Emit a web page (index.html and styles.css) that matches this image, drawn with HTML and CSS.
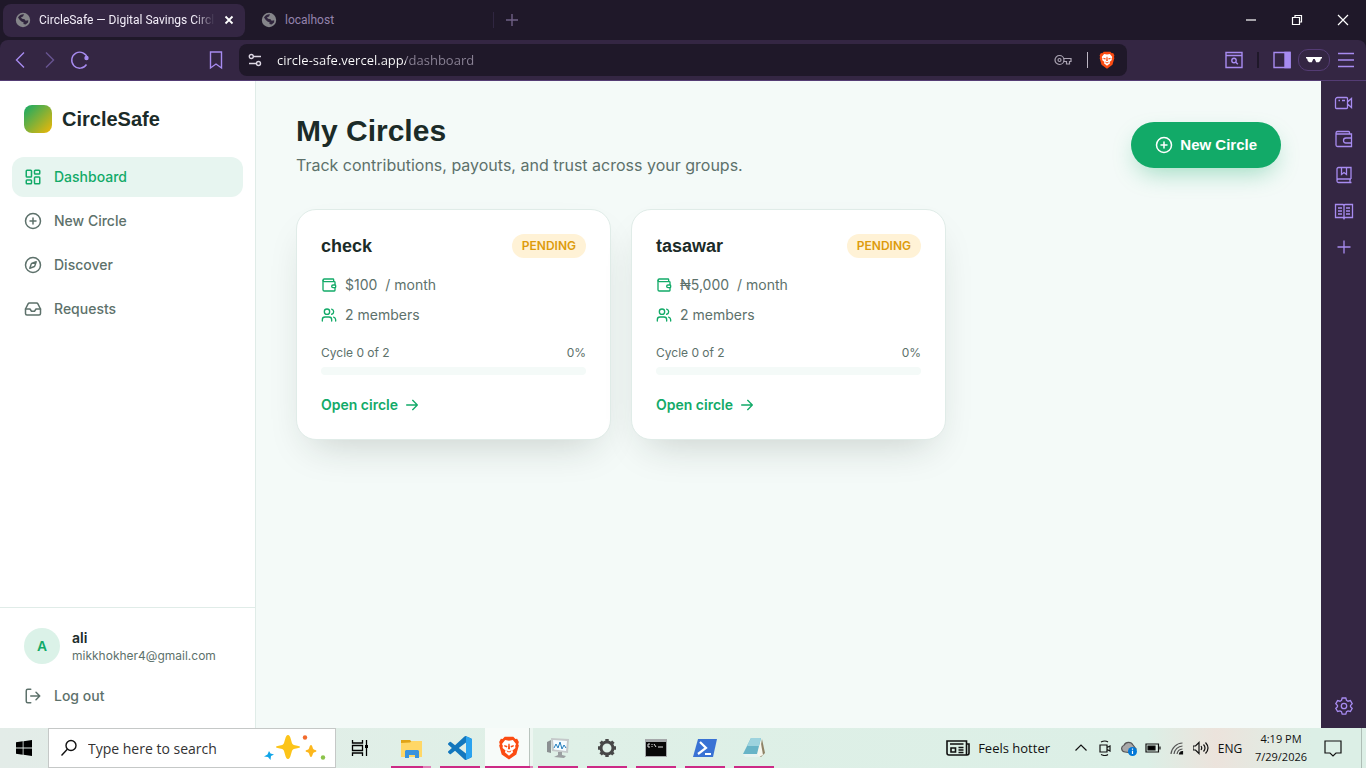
FILE: index.html
```
<!DOCTYPE html>
<html lang="en">

<head>
    <meta charset="UTF-8">
    <meta name="viewport" content="width=device-width, initial-scale=1.0">
    <title>CircleSafe — Digital Savings Circles</title>
    <link rel="stylesheet" href="styles.css">
</head>

<body>
    <!-- shared icons -->
    <svg class="sprite" aria-hidden="true">
        <symbol id="i-globe" viewBox="0 0 16 16">
            <circle cx="8" cy="8" r="7.2" fill="#85858a" />
            <path d="M3 5.5C4.500 3 7 2 9 2.300L8 4.500 6 5.200l1 1.600 2.500.4 1.200 1.600 2.600-.6-.3 2.300-2.400 2-2.200-.4.300-1.700L6.500 9.500 4.800 8z" fill="#30253d" />
        </symbol>
        <symbol id="i-plus" viewBox="0 0 24 24">
            <circle cx="12" cy="12" r="10" />
            <path d="M8 12h8M12 8v8" />
        </symbol>
        <symbol id="i-wallet" viewBox="0 0 24 24">
            <path d="M19 7V4a1 1 0 0 0-1-1H5a2 2 0 0 0 0 4h15a1 1 0 0 1 1 1v4h-3a2 2 0 0 0 0 4h3a1 1 0 0 0 1-1v-2a1 1 0 0 0-1-1" />
            <path d="M3 5v14a2 2 0 0 0 2 2h15a1 1 0 0 0 1-1v-4" />
        </symbol>
        <symbol id="i-users" viewBox="0 0 24 24">
            <path d="M16 21v-2a4 4 0 0 0-4-4H6a4 4 0 0 0-4 4v2" />
            <circle cx="9" cy="7" r="4" />
            <path d="M22 21v-2a4 4 0 0 0-3-3.870M16 3.130a4 4 0 0 1 0 7.750" />
        </symbol>
        <symbol id="i-arrow" viewBox="0 0 24 24">
            <path d="M4 12h16M13 5l7 7-7 7" />
        </symbol>
        <symbol id="i-brave" viewBox="0 0 24 28">
            <path d="M7 1h10l2.500 2.500 2-.3L23.500 7l-.8 2.500.8 1.500-3 10.500L12 27.500l-8.500-6L.5 11l.8-1.500L.5 7l2-3.800 2 .3z" fill="#fb4b12" />
            <path d="M12 5.500l4.500-.8 3.700 4.500-1 2.300.3 2.500-3.500 3 .8 2-4.800 4-4.800-4 .8-2-3.500-3 .3-2.500-1-2.300 3.700-4.500z" fill="#fff" />
            <path d="M6.500 10.500l3.800 1.300-.8 1.500-3-1zM17.500 10.500l-3.800 1.300.8 1.500 3-1zM11.300 9h1.400l.6 6.500h-2.600zM9 16.500l3 1.500 3-1.500-1.500 2.500h-3z" fill="#fb4b12" />
        </symbol>
    </svg>

    <div class="screen">
        <header class="browser">
            <div class="tabs">
                <div class="tab tab-active">
                    <svg class="favicon"><use href="#i-globe" /></svg>
                    <button class="tab-title" type="button">CircleSafe — Digital Savings Circl</button>
                    <button class="tab-close" type="button" aria-label="Close tab">
                        <svg viewBox="0 0 10 10" width="10" height="10"><path d="M1.500 1.500l7 7M8.500 1.500l-7 7" stroke="#fff" stroke-width="1.800" /></svg>
                    </button>
                </div>
                <div class="tab tab-idle">
                    <svg class="favicon"><use href="#i-globe" /></svg>
                    <button class="tab-title" type="button">localhost</button>
                </div>
                <button class="tab-new" type="button" aria-label="New tab">
                    <svg viewBox="0 0 12 12" width="12" height="12"><path d="M6 0v12M0 6h12" stroke="#6f6085" stroke-width="1.400" /></svg>
                </button>
                <div class="window-buttons">
                    <button type="button" aria-label="Minimize"><svg viewBox="0 0 12 12"><path d="M1 6h10" /></svg></button>
                    <button type="button" aria-label="Restore"><svg viewBox="0 0 12 12"><path d="M1.500 3.500h7v7h-7zM4 3V1.500h6.500V8H9" /></svg></button>
                    <button type="button" aria-label="Close"><svg viewBox="0 0 12 12"><path d="M1 1l10 10M11 1L1 11" /></svg></button>
                </div>
            </div>

            <div class="toolbar">
                <div class="nav-buttons">
                    <button type="button" aria-label="Back"><svg viewBox="0 0 20 20"><path d="M14 2.500L6.500 10l7.500 7.500" /></svg></button>
                    <button class="dim" type="button" aria-label="Forward"><svg viewBox="0 0 20 20"><path d="M6 2.500l7.500 7.500L6 17.500" /></svg></button>
                    <button type="button" aria-label="Reload"><svg viewBox="0 0 20 20"><path d="M17.500 8.200A8 8 0 1 0 16.500 14.500" /><circle cx="16.500" cy="8" r="1.500" fill="#a78bf0" /></svg></button>
                </div>
                <button class="bookmark" type="button" aria-label="Bookmark"><svg viewBox="0 0 20 20"><path d="M4.500 2h11v16L10 14l-5.500 4z" /></svg></button>
                <div class="address">
                    <svg class="site-info" viewBox="0 0 14 14"><path d="M5.500 3.500H13M1 10.500h7" /><circle cx="3.300" cy="3.500" r="2" /><circle cx="10.500" cy="10.500" r="2" /></svg>
                    <input class="url" type="text" aria-label="Address" value="circle-safe.vercel.app/dashboard">
                    <svg class="key" viewBox="0 0 18 12"><circle cx="5.500" cy="6" r="4.500" /><circle cx="5.500" cy="6" r="1.500" /><path d="M9.500 4.500H17v3h-1.500V10h-3V7.500h-3" /></svg>
                    <span class="bar"></span>
                    <svg class="shield"><use href="#i-brave" /></svg>
                </div>
                <div class="tools">
                    <button type="button" aria-label="Search tabs"><svg viewBox="0 0 20 20"><path d="M2 2.500h16v15H2zM2 5.500h16" /><circle cx="10" cy="10.500" r="2.200" /><path d="M11.800 12.300l2 2" /></svg></button>
                    <span class="tool-split"></span>
                    <button type="button" aria-label="Sidebar"><svg viewBox="0 0 20 20"><path d="M2 2.500h16v15H2z" /><path d="M13 2.500h5v15h-5z" fill="#a78bf0" /></svg></button>
                    <button class="private" type="button" aria-label="Private window"><svg viewBox="0 0 16 8"><path d="M0 1h16v1.500h-1l-.8 2.500-1.500 1.200h-2.500L8.700 3H7.300L5.800 6.200H3.300L1.800 5 1 2.500H0z" fill="#fff" /></svg></button>
                    <button type="button" aria-label="Menu"><svg viewBox="0 0 20 20"><path d="M2 3.500h16M2 10h16M2 16.500h16" /></svg></button>
                </div>
            </div>
        </header>

        <div class="viewport">
            <aside class="sidebar">
                <div class="brand">
                    <span class="brand-mark"></span>
                    <span class="brand-name">CircleSafe</span>
                </div>
                <nav class="menu">
                    <a class="menu-item current" href="#">
                        <svg class="icon" viewBox="0 0 24 24"><rect x="3" y="3" width="7" height="9" rx="1" /><rect x="14" y="3" width="7" height="5" rx="1" /><rect x="14" y="12" width="7" height="9" rx="1" /><rect x="3" y="16" width="7" height="5" rx="1" /></svg>
                        Dashboard
                    </a>
                    <a class="menu-item" href="#">
                        <svg class="icon"><use href="#i-plus" /></svg>
                        New Circle
                    </a>
                    <a class="menu-item" href="#">
                        <svg class="icon" viewBox="0 0 24 24"><path d="m16.240 7.760-1.804 5.411a2 2 0 0 1-1.265 1.265L7.760 16.240l1.804-5.411a2 2 0 0 1 1.265-1.265z" /><circle cx="12" cy="12" r="10" /></svg>
                        Discover
                    </a>
                    <a class="menu-item" href="#">
                        <svg class="icon" viewBox="0 0 24 24"><path d="M22 12h-6l-2 3h-4l-2-3H2" /><path d="M5.450 5.110 2 12v6a2 2 0 0 0 2 2h16a2 2 0 0 0 2-2v-6l-3.450-6.890A2 2 0 0 0 16.760 4H7.240a2 2 0 0 0-1.790 1.110z" /></svg>
                        Requests
                    </a>
                </nav>
                <div class="account">
                    <div class="user">
                        <span class="avatar">A</span>
                        <div class="user-text">
                            <p class="user-name">ali</p>
                            <p class="user-mail">mikkhokher4@gmail.com</p>
                        </div>
                    </div>
                    <button class="menu-item" type="button">
                        <svg class="icon" viewBox="0 0 24 24"><path d="m16 17 5-5-5-5M21 12H9M9 21H5a2 2 0 0 1-2-2V5a2 2 0 0 1 2-2h4" /></svg>
                        Log out
                    </button>
                </div>
            </aside>

            <main class="content">
                <div class="page-head">
                    <div>
                        <h1>My Circles</h1>
                        <p class="lead">Track contributions, payouts, and trust across your groups.</p>
                    </div>
                    <button class="btn-new" type="button">
                        <svg class="icon"><use href="#i-plus" /></svg>
                        New Circle
                    </button>
                </div>
                <div class="circles">
                    <article class="card">
                        <div class="card-top">
                            <h2>check</h2>
                            <span class="badge">PENDING</span>
                        </div>
                        <ul class="facts">
                            <li><svg class="icon"><use href="#i-wallet" /></svg><span>$100</span><span>/ month</span></li>
                            <li><svg class="icon"><use href="#i-users" /></svg><span>2 members</span></li>
                        </ul>
                        <div class="cycle"><span>Cycle 0 of 2</span><span>0%</span></div>
                        <div class="track"></div>
                        <a class="open" href="#">Open circle <svg class="icon"><use href="#i-arrow" /></svg></a>
                    </article>
                    <article class="card">
                        <div class="card-top">
                            <h2>tasawar</h2>
                            <span class="badge">PENDING</span>
                        </div>
                        <ul class="facts">
                            <li><svg class="icon"><use href="#i-wallet" /></svg><span>₦5,000</span><span>/ month</span></li>
                            <li><svg class="icon"><use href="#i-users" /></svg><span>2 members</span></li>
                        </ul>
                        <div class="cycle"><span>Cycle 0 of 2</span><span>0%</span></div>
                        <div class="track"></div>
                        <a class="open" href="#">Open circle <svg class="icon"><use href="#i-arrow" /></svg></a>
                    </article>
                </div>
            </main>

            <div class="rail">
                <button type="button" aria-label="Talk"><svg viewBox="0 0 20 20"><path d="M3.500 4.500h9a1 1 0 0 1 1 1v9a1 1 0 0 1-1 1h-10a1 1 0 0 1-1-1v-8a2 2 0 0 1 2-2zM13.500 9l4-3.500v9L13.500 11M4.500 7.500h1.500M8 7.500h3" /></svg></button>
                <button type="button" aria-label="Wallet"><svg viewBox="0 0 20 20"><path d="M15.500 5V3.500a1 1 0 0 0-1-1H3.500A1.700 1.700 0 0 0 2 4v12a1.500 1.500 0 0 0 1.500 1.500h14V5H2M17.500 9H12a2 2 0 0 0 0 5h5.500" /></svg></button>
                <button type="button" aria-label="Bookmarks"><svg viewBox="0 0 20 20"><path d="M17 14V2.500H4.500A1.500 1.500 0 0 0 3 4v12a1.500 1.500 0 0 0 1.500 1.500H17.500M17 14H4.500A1.500 1.500 0 0 0 3 15.500M16 14v3.500M7.500 2.500v7L10 7.500l2.500 2v-7" /></svg></button>
                <button type="button" aria-label="Reading list"><svg viewBox="0 0 20 20"><path d="M1.500 3.500H9l1 1 1-1h7.500v13H11l-1 1-1-1H1.500zM10 4.500v14M4 7h4M4 10h4M4 13h4M12 7h4M12 10h4M12 13h4" /></svg></button>
                <button type="button" aria-label="Add"><svg viewBox="0 0 20 20"><path d="M10 3.500v13M3.500 10h13" /></svg></button>
                <button class="rail-settings" type="button" aria-label="Settings"><svg viewBox="0 0 20 20"><path d="M8.200 2h3.600l.7 2.300 1.500.9 2.400-.6 1.800 3.100L16.500 9.500v1.200l1.700 1.700-1.800 3.100-2.400-.6-1.500.9-.7 2.300H8.200l-.7-2.300-1.500-.9-2.400.6-1.800-3.100 1.700-1.700V9.500L1.800 7.700l1.800-3.100L6 5.200l1.500-.9z" /><circle cx="10" cy="10" r="2.700" /></svg></button>
            </div>
        </div>

        <footer class="taskbar">
            <button class="start" type="button" aria-label="Start">
                <svg viewBox="0 0 16 16" width="16" height="16"><path d="M0 2.300L6.700 1.300v6.300H0zM7.500 1.200L16 0v7.600H7.500zM0 8.400h6.700v6.300L0 13.700zM7.500 8.400H16V16l-8.500-1.200z" /></svg>
            </button>
            <label class="search">
                <svg class="search-icon" viewBox="0 0 18 18"><circle cx="11" cy="6.500" r="5" /><path d="M7.300 10.200L1.500 16.500" /></svg>
                <input type="text" placeholder="Type here to search" aria-label="Search">
                <svg class="sparkles" viewBox="0 0 62 26">
                    <path d="M24 0c3 0 3 8 5 9.500S36 10.500 36 12s-5 1-7 2.500S27 24 24 24s-3-8-5-9.500S12 13.500 12 12s5-1 7-2.500S21 0 24 0z" fill="#fcc419" />
                    <path d="M47 10c1.500 0 1.500 3.500 2.500 4.200s3 .8 3 1.800-2 1-3 1.800S48.500 22 47 22s-1.500-3.500-2.500-4.200-3-.8-3-1.800 2-1 3-1.800S45.500 10 47 10z" fill="#fcb71d" />
                    <path d="M5 16l1.500 2.500 3.500 1-3 1.500-.5 4-2.500-3-4-.5 3.500-2z" fill="#11a5e8" />
                    <circle cx="41" cy="2.500" r="2.200" fill="#f26a2c" />
                    <circle cx="59" cy="22.500" r="2.200" fill="#8bc34a" />
                </svg>
            </label>
            <button class="task-view" type="button" aria-label="Task view">
                <svg viewBox="0 0 18 16" width="18" height="16"><path d="M1.500 0v3h10V0M1.500 16v-3h10v3M1.500 5.500h10v5h-10zM15.500 0v16" fill="none" stroke="#000" stroke-width="1.300" /><path d="M14 5h3v3h-3z" /></svg>
            </button>
            <div class="apps">
                <button class="app-stack" type="button" aria-label="File Explorer">
                    <svg viewBox="0 0 24 24"><path d="M2 4h9l2 2h10v15H2z" fill="#e0a417" /><path d="M2 7l9-.5 2-1.500h10v16H2z" fill="#ffd766" /><path d="M6 22v-7l1-1h12l1 1v7h-4v-3h-6v3z" fill="#3a93dd" /></svg>
                </button>
                <button type="button" aria-label="Visual Studio Code">
                    <svg viewBox="0 0 24 24"><path d="M23.150 2.587L18.210.210a1.494 1.494 0 0 0-1.705.290l-9.460 8.630-4.120-3.128a.999.999 0 0 0-1.276.057L.327 7.261A1 1 0 0 0 .326 8.740L3.899 12 .326 15.260a1 1 0 0 0 .001 1.479L1.650 17.940a.999.999 0 0 0 1.276.057l4.120-3.128 9.460 8.630a1.492 1.492 0 0 0 1.704.290l4.942-2.377A1.500 1.500 0 0 0 24 20.060V3.939a1.500 1.500 0 0 0-.850-1.352zm-5.146 14.861L10.826 12l7.178-5.448v10.896z" fill="#1377bd" /><path d="M18 .2l5.200 2.400a1.500 1.500 0 0 1 .8 1.300v16.200a1.500 1.500 0 0 1-.8 1.300L18 23.800z" fill="#2ba3ef" /></svg>
                </button>
                <button class="app-active" type="button" aria-label="Brave"><svg><use href="#i-brave" /></svg></button>
                <button type="button" aria-label="Resource Monitor">
                    <svg viewBox="0 0 24 24"><path d="M1 6l4-2v13l-4-1z" fill="#8b9092" /><path d="M5 2l18 1-1 14-16-2z" fill="#c5c9ca" /><path d="M7 4l14 1-1 10-12-1.500z" fill="#f5fbff" /><path d="M8 12l2-4 2 4 2-6 2 7 2-4 2 3" fill="none" stroke="#237dbb" /><path d="M12 16h4v3l4 1-2 2-10-1 4-2z" fill="#9ca0a2" /></svg>
                </button>
                <button type="button" aria-label="Settings">
                    <svg viewBox="0 0 24 24"><circle cx="12" cy="12" r="6" fill="none" stroke="#474747" stroke-width="3" /><path d="M12 3v3M12 18v3M3 12h3M18 12h3M5.600 5.600l2.200 2.200M16.200 16.200l2.200 2.200M5.600 18.400l2.200-2.200M16.200 7.800l2.200-2.200" stroke="#474747" stroke-width="3.400" /></svg>
                </button>
                <button type="button" aria-label="Command Prompt">
                    <svg viewBox="0 0 24 24"><path d="M1 3h22v18H1z" fill="#a5a8aa" /><path d="M2 6h20v14H2z" fill="#080808" /><path d="M6 8H4v3h2M8 8v1M8 10v1M10 8l2 3M14 11h5" fill="none" stroke="#ddd" /></svg>
                </button>
                <button type="button" aria-label="PowerShell">
                    <svg viewBox="0 0 24 24"><path d="M5 3h19l-4 18H0z" fill="#3972d4" /><path d="M7 6l6 6-8 6M12 18h6" fill="none" stroke="#fff" stroke-width="2.200" /></svg>
                </button>
                <button type="button" aria-label="Notepad">
                    <svg viewBox="0 0 24 24"><path d="M20 3l3 14-4 4-2-1z" fill="#8f8266" /><path d="M18 2l3 17-4 2-2-3z" fill="#f6f6ed" /><path d="M9 2h10l-4 16H1z" fill="#68b4c7" /><path d="M9 2h10l-2 8H5z" fill="#9dd3de" /><path d="M1 18h14l2 3H3z" fill="#e8f3f0" /></svg>
                </button>
            </div>
            <div class="tray">
                <button class="weather" type="button">
                    <svg viewBox="0 0 24 16"><path d="M1 1h19.500v14H3a2 2 0 0 1-2-2zM20.500 4H23v9a2 2 0 0 1-2 2M4 4h13.500M12.500 7.500h5M12.500 10h5M12.500 12.500h5M5 8h4.500v4H5z" fill="none" stroke="#111" stroke-width="1.600" /></svg>
                    Feels hotter
                </button>
                <button type="button" aria-label="Show hidden icons"><svg viewBox="0 0 16 16"><path d="M2.500 10.500L8 5l5.500 5.500" /></svg></button>
                <button type="button" aria-label="Camera in use"><svg viewBox="0 0 16 16"><path d="M3 5h7v7H3zM10 7.500l3-1.500v5l-3-1.500M4 2q4-2 7 0M4 14.500q4 2 7 0" /></svg></button>
                <button type="button" aria-label="OneDrive"><svg viewBox="0 0 16 16"><path d="M4 12a3.500 3.500 0 0 1-1-6.800A5 5 0 0 1 12 5l3 4-3 4z" fill="#a9a9a9" stroke="#555" /><circle cx="11.500" cy="11.500" r="4.500" fill="#0078d7" stroke="none" /><path d="M11.500 10.800v3.200M11.500 8.500v1.300" stroke="#fff" /></svg></button>
                <button type="button" aria-label="Battery"><svg viewBox="0 0 16 16"><path d="M1 4h12.500v8H1zM15 6.500v3" /><path d="M3 6h7v4H3z" fill="#000" /></svg></button>
                <button type="button" aria-label="Wi-Fi"><svg viewBox="0 0 16 16"><path d="M2 14A12 12 0 0 1 13.500 3M5 14a9 9 0 0 1 8.500-8M8 14a6 6 0 0 1 5.500-5" stroke="#555" /><path d="M10.500 14a3 3 0 0 1 3-2.500V14z" fill="#000" /></svg></button>
                <button type="button" aria-label="Volume"><svg viewBox="0 0 16 16"><path d="M0 6h2.500L6 2.500v11L2.500 10H0zM8 6q1.500 2 0 4M10.500 4.500q3 3.500 0 7M12.500 2.500q5 5.500 0 11" /></svg></button>
                <button class="lang" type="button">ENG</button>
                <button class="clock" type="button"><span>4:19 PM</span><span>7/29/2026</span></button>
                <button class="notices" type="button" aria-label="Notifications"><svg viewBox="0 0 18 18"><path d="M1 2h16v12h-5l-3 3-3-3H1z" /></svg></button>
                <span class="desktop-edge"></span>
            </div>
        </footer>
    </div>
</body>

</html>
```
FILE: styles.css
```
* {
    margin: 0;
    padding: 0;
    box-sizing: border-box;
}

ul {
    list-style: none;
}

a {
    text-decoration: none;
}

button,
input {
    font: inherit;
    color: inherit;
    background: none;
    border: 0;
    outline: 0;
}

body {
    font-family: Inter, "Liberation Sans", sans-serif;
    font-size: 14px;
    color: #1b2b28;
    overflow: hidden;
}

.sprite {
    display: none;
}

.screen {
    display: flex;
    flex-direction: column;
    height: 100vh;
    background: #1f1829;
}

/* browser */
.browser,
.taskbar {
    font-family: "Open Sans", "Noto Sans", sans-serif;
    flex: none;
}

.browser svg,
.rail svg {
    fill: none;
    stroke: #a78bf0;
    stroke-width: 1.4;
}

.tabs {
    display: flex;
    align-items: center;
    height: 40px;
    padding-left: 3px;
}

.tab {
    display: flex;
    align-items: center;
    height: 33px;
    padding: 0 10px 0 12px;
    border-radius: 8px;
    color: #9483ad;
    font-family: Roboto, sans-serif;
    font-size: 12px;
}

.tab-active {
    width: 242px;
    background: #342643;
    color: #f2edf8;
}

.tab-active .tab-title {
    -webkit-mask-image: linear-gradient(90deg, #000 88%, transparent);
    mask-image: linear-gradient(90deg, #000 88%, transparent);
}

.tab-idle {
    width: 244px;
    margin-left: 4px;
}

.tab-title {
    flex: 1;
    overflow: hidden;
    white-space: nowrap;
    text-align: left;
}

.browser .favicon {
    flex: none;
    width: 16px;
    height: 16px;
    margin-right: 8px;
    stroke: none;
}

.tab-close {
    display: flex;
    margin-left: 8px;
    padding: 2px 1px;
}

.tab-new {
    display: flex;
    align-items: center;
    height: 16px;
    padding: 0 12px;
    border-left: 1px solid #302641;
}

.window-buttons {
    display: flex;
    margin-left: auto;
}

.window-buttons button {
    display: flex;
    align-items: center;
    justify-content: center;
    width: 46px;
    height: 40px;
}

.window-buttons svg {
    width: 12px;
    height: 12px;
    stroke: #fff;
    stroke-width: 1.2;
}

.toolbar {
    display: flex;
    align-items: center;
    height: 41px;
    padding: 0 10px;
    background: #342643;
    border-bottom: 1px solid #543c74;
    border-radius: 8px 8px 0 0;
}

.toolbar button {
    display: flex;
    flex: none;
}

.toolbar button svg {
    width: 20px;
    height: 20px;
}

.nav-buttons {
    display: flex;
    gap: 10px;
}

.dim {
    opacity: .45;
}

.bookmark {
    margin: 0 13px 0 116px;
}

.address {
    display: flex;
    flex: 1;
    align-items: center;
    height: 32px;
    padding: 0 12px 0 9px;
    background: #1f1829;
    border-radius: 8px;
}

.address .site-info {
    width: 14px;
    height: 14px;
    margin-right: 15px;
    stroke: #ddd7e4;
}

/* host in white, path in grey */
.url {
    flex: 1;
    font-size: 13px;
    color: transparent;
    background: linear-gradient(90deg, #fff 129px, #8b8396 129px);
    -webkit-background-clip: text;
    background-clip: text;
}

.address .key {
    width: 18px;
    height: 12px;
    stroke: #aaa3b2;
    stroke-width: 1.2;
}

.bar {
    width: 1px;
    height: 16px;
    margin: 0 11px 0 15px;
    background: #bdb7c4;
}

.address .shield {
    width: 16px;
    height: 18px;
    stroke: none;
}

.tools {
    display: flex;
    align-items: center;
    margin-left: 97px;
}

.tool-split {
    width: 2px;
    height: 16px;
    margin: 0 13px;
    background: #1f1829;
}

.toolbar .private {
    align-items: center;
    justify-content: center;
    width: 32px;
    height: 22px;
    margin: 0 6px;
    border: 1px solid #543c74;
    border-radius: 10px;
}

.toolbar .private svg {
    width: 16px;
    height: 8px;
    stroke: none;
}

/* page area */
.viewport {
    display: flex;
    flex: 1;
    min-height: 0;
    background: #f4faf8;
}

.icon {
    flex: none;
    width: 18px;
    height: 18px;
    fill: none;
    stroke: currentColor;
    stroke-width: 2;
    stroke-linecap: round;
    stroke-linejoin: round;
}

.sidebar {
    display: flex;
    flex-direction: column;
    flex: none;
    width: 256px;
    background: #fff;
    border-right: 1px solid #e0ece8;
}

.brand {
    display: flex;
    align-items: center;
    gap: 10px;
    padding: 24px;
}

.brand-mark {
    width: 28px;
    height: 28px;
    border-radius: 8px;
    background: linear-gradient(135deg, #12aa68, #f2b705);
}

.brand-name,
h1,
h2,
.btn-new,
.avatar {
    font-family: "Liberation Sans", sans-serif;
    font-weight: 700;
}

.brand-name {
    font-size: 20px;
}

.menu {
    display: flex;
    flex-direction: column;
    gap: 4px;
    padding: 0 12px;
}

.menu-item {
    display: flex;
    align-items: center;
    gap: 12px;
    width: 100%;
    height: 40px;
    padding: 0 12px;
    border-radius: 12px;
    color: #5d716b;
    font-weight: 500;
    line-height: 20px;
}

.menu-item.current {
    background: #e7f5f0;
    color: #12aa68;
}

.account {
    margin-top: auto;
    padding: 12px;
    border-top: 1px solid #e0ece8;
}

.user {
    display: flex;
    align-items: center;
    gap: 12px;
    padding: 8px 12px;
    margin-bottom: 4px;
}

.avatar {
    display: flex;
    align-items: center;
    justify-content: center;
    width: 36px;
    height: 36px;
    border-radius: 50%;
    background: #dbf2e8;
    color: #12aa68;
}

.user-name {
    font-weight: 600;
    line-height: 20px;
}

.user-mail {
    font-size: 12px;
    line-height: 16px;
    color: #5d716b;
}

.content {
    flex: 1;
    padding: 32px 40px;
}

.page-head {
    display: flex;
    align-items: center;
    justify-content: space-between;
    margin-bottom: 32px;
}

h1 {
    font-size: 30px;
    line-height: 36px;
    margin-bottom: 4px;
}

.lead {
    font-size: 16px;
    line-height: 24px;
    color: #5d716b;
}

.btn-new {
    display: flex;
    align-items: center;
    gap: 7px;
    height: 46px;
    padding: 0 24px;
    border-radius: 23px;
    background: #12aa68;
    color: #fff;
    font-size: 15px;
    line-height: 18px;
    box-shadow: 0 10px 24px -6px rgba(18, 170, 104, .4);
}

.circles {
    display: grid;
    grid-template-columns: repeat(3, 1fr);
    gap: 20px;
}

.card {
    padding: 24px;
    background: #fff;
    border: 1px solid #e0ece8;
    border-radius: 20px;
    box-shadow: 0 18px 40px -16px rgba(27, 43, 30, .22);
}

.card-top {
    display: flex;
    align-items: center;
    justify-content: space-between;
    margin-bottom: 16px;
}

h2 {
    font-size: 18px;
    line-height: 24px;
}

.badge {
    padding: 0 10px;
    border-radius: 12px;
    background: #fff2d6;
    color: #dd9b0c;
    font-size: 12px;
    font-weight: 600;
    line-height: 24px;
}

.facts li {
    display: flex;
    align-items: center;
    gap: 8px;
    margin-bottom: 8px;
    line-height: 22px;
    color: #5d716b;
}

.facts .icon {
    width: 16px;
    height: 16px;
    color: #12aa68;
}

.cycle {
    display: flex;
    justify-content: space-between;
    margin: 18px 0 5px;
    font-size: 12px;
    line-height: 18px;
    color: #5d716b;
}

.track {
    height: 8px;
    margin-bottom: 20px;
    border-radius: 4px;
    background: #f4faf8;
}

.open {
    display: flex;
    align-items: center;
    gap: 6px;
    line-height: 20px;
    font-weight: 600;
    color: #12aa68;
}

.open .icon {
    width: 16px;
    height: 16px;
}

.rail {
    display: flex;
    flex-direction: column;
    align-items: center;
    gap: 16px;
    flex: none;
    width: 45px;
    padding: 12px 0;
    background: #342643;
}

.rail button,
.rail svg {
    display: block;
    width: 20px;
    height: 20px;
}

.rail svg {
    stroke-width: 1.3;
}

.rail-settings {
    margin-top: auto;
}

/* taskbar */
.taskbar {
    display: flex;
    height: 40px;
    color: #111;
    background: linear-gradient(90deg, #e3ece8, #dff0e7 40%, #dcefe6 84%, #ece3dc 89%, #dcefe6 96%);
}

.taskbar button {
    display: flex;
    align-items: center;
    justify-content: center;
}

.start,
.task-view {
    width: 48px;
}

.search {
    display: flex;
    align-items: center;
    width: 288px;
    padding: 0 9px 0 11px;
    background: #fff;
    border: 1px solid #c5c8c7;
}

.search-icon {
    width: 18px;
    height: 18px;
    fill: none;
    stroke: #111;
    stroke-width: 1.4;
}

.search input {
    flex: 1;
    min-width: 0;
    padding-left: 10px;
    font-size: 14px;
}

.search input::placeholder {
    color: #333;
}

.sparkles {
    width: 62px;
    height: 26px;
}

.apps {
    display: flex;
    gap: 1px;
    margin-left: 3px;
}

.apps button {
    position: relative;
    width: 48px;
}

.apps svg {
    width: 24px;
    height: 24px;
}

.apps button::after {
    content: "";
    position: absolute;
    left: 4px;
    right: 4px;
    bottom: 0;
    height: 2px;
    background: #cc2a86;
}

/* more than one window open */
.apps .app-stack::after {
    background: linear-gradient(90deg, #cc2a86 32px, #e07fb6 32px);
}

.apps .app-active {
    background: linear-gradient(90deg, #f7fbf9 44px, #b9c4be 44px, #b9c4be 45px, #edf6f1 45px);
}

.apps .app-active::after {
    left: 0;
    right: 0;
    background: linear-gradient(90deg, #cc2a86 45px, #e07fb6 45px);
}

.tray {
    display: flex;
    align-items: center;
    margin-left: auto;
}

.tray button {
    width: 24px;
    height: 40px;
}

.tray svg {
    width: 16px;
    height: 16px;
    fill: none;
    stroke: #111;
    stroke-width: 1.2;
}

.tray .weather {
    gap: 8px;
    width: auto;
    margin-right: 19px;
    font-size: 13px;
    white-space: nowrap;
}

.tray .weather svg {
    width: 24px;
}

.tray .lang {
    width: 34px;
    font-size: 12px;
}

.tray .clock {
    flex-direction: column;
    width: 68px;
    font-size: 11px;
    line-height: 18px;
}

.tray .notices {
    width: 36px;
}

.notices svg {
    width: 18px;
    height: 18px;
}

.desktop-edge {
    width: 5px;
    height: 40px;
    margin-left: 10px;
    border-left: 1px solid #aebdb6;
}
```
